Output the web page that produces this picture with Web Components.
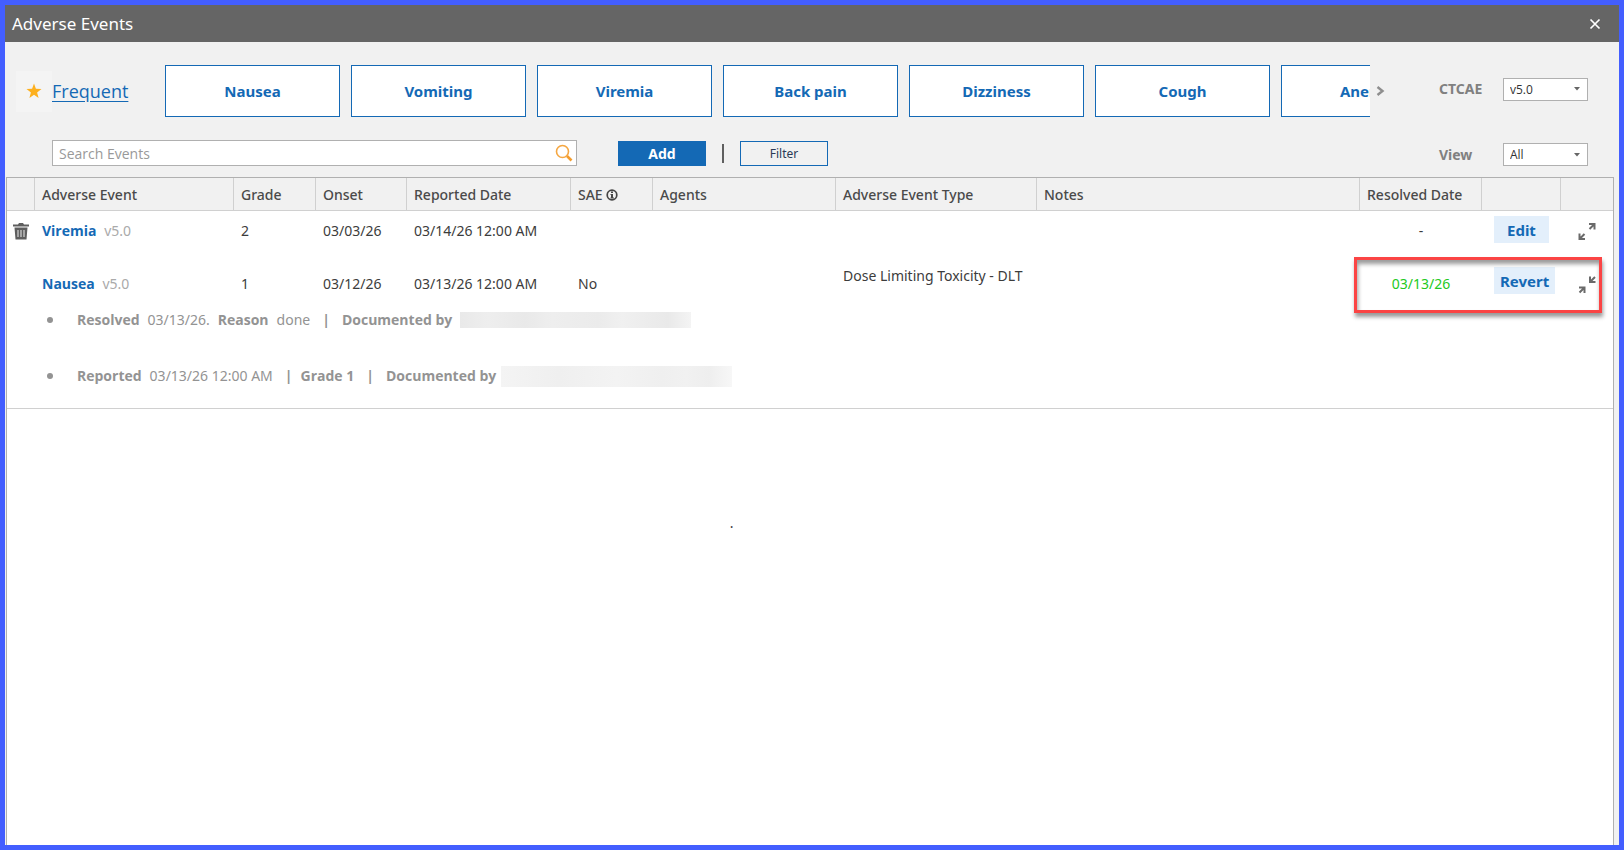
<!DOCTYPE html>
<html lang="en">
<head>
<meta charset="utf-8">
<title>Adverse Events</title>
<style>
    body {
        margin: 0;
        font-family: "Noto Sans", "Open Sans", sans-serif;
        font-size: 14px;
        line-height: 20px;
        color: #3c3c3c;
        --blue: #1469b5;
        --line: #d0d0d0;
        --edge: #b0b0b0;
        --panel: #f1f1f1;
    }
</style>
</head>
<body>
<adverse-dialog heading="Adverse Events">
    <frequent-bar>
        <event-chip>Nausea</event-chip>
        <event-chip>Vomiting</event-chip>
        <event-chip>Viremia</event-chip>
        <event-chip>Back pain</event-chip>
        <event-chip>Dizziness</event-chip>
        <event-chip>Cough</event-chip>
        <event-chip>Anemia</event-chip>
        <labelled-select slot="end" label="CTCAE" options="v5.0,v4.0"></labelled-select>
    </frequent-bar>
    <search-bar>
        <labelled-select slot="end" label="View" options="All,Active,Resolved"></labelled-select>
    </search-bar>
    <event-table></event-table>
</adverse-dialog>

<script>
const ICONS = {
    close: '<svg width="12" height="12" viewBox="0 0 12 12"><path d="M1.500 1.500l9 9M10.500 1.500l-9 9" stroke="#fff" stroke-width="1.700"/></svg>',
    star: '<svg width="16" height="16" viewBox="0 0 16 16"><path d="M8 .5l1.900 5.300 5.600.100-4.400 3.500 1.500 5.600L8 11.800 3.400 15l1.500-5.600L.5 5.900l5.600-.1z" fill="#fdb01e"/></svg>',
    next: '<svg width="9" height="10" viewBox="0 0 9 10"><path d="M1.500 1L6.500 5l-5 4" fill="none" stroke="#8e8e8e" stroke-width="2.400"/></svg>',
    search: '<svg width="18" height="18" viewBox="0 0 18 18"><circle cx="7.500" cy="7.500" r="6" fill="none" stroke="#f5a742" stroke-width="1.600"/><path d="M12 12l4.500 4.500" stroke="#f39c2d" stroke-width="2.600"/></svg>',
    caret: '<svg width="6" height="4" viewBox="0 0 6 4"><path d="M0 0h6L3 3.500z" fill="#666"/></svg>',
    info: '<svg width="12" height="12" viewBox="0 0 12 12"><circle cx="6" cy="6" r="4.800" fill="none" stroke="#454545" stroke-width="1.700"/><path d="M5 2.500h2v1.500H5zM4.500 5H7v3.500h1v1H4.500v-1H5V6h-.5z" fill="#454545"/></svg>',
    trash: '<svg width="16" height="17" viewBox="0 0 16 17"><path d="M0 1.500h5L6 0h4l1 1.500h5v2H0zM1.500 4.500h13l-1 12h-11z" fill="#5e5e5e"/><path d="M5 7v7M8 7v7M11 7v7" stroke="#d5d5d5" stroke-width="1.200"/></svg>',
    expand: '<svg width="18" height="19" viewBox="0 0 18 19"><path d="M11 2h5.500v5.500M16 2.500L11.500 7M1.500 11.500V17H7M2 16.500L6.500 12" fill="none" stroke="#6a6a6a" stroke-width="2"/></svg>',
    collapse: '<svg width="18" height="19" viewBox="0 0 18 19"><path d="M12 1.500V7h5.500M12.500 6.500L17 2M1 12.500h5.500V18M6 13L1.500 17.500" fill="none" stroke="#6a6a6a" stroke-width="2"/></svg>'
};

class AdverseDialog extends HTMLElement {
    constructor() {
        super();
        this.attachShadow({ mode: 'open' });
    }

    connectedCallback() {
        this.shadowRoot.innerHTML = `
            <style>
                :host {
                    display: flex;
                    flex-direction: column;
                    box-sizing: border-box;
                    min-height: 100vh;
                    border: 5px solid #435eff;
                    background: var(--panel);
                }

                header {
                    display: flex;
                    align-items: center;
                    justify-content: space-between;
                    height: 37px;
                    padding: 0 18px 0 7px;
                    background: #656565;
                    color: #fff;
                }

                h1 {
                    margin: 0;
                    font: 400 17px "Noto Sans", sans-serif;
                }

                button {
                    display: flex;
                    padding: 0;
                    border: 0;
                    background: none;
                }
            </style>
            <header>
                <h1>${this.getAttribute('heading')}</h1>
                <button aria-label="Close">${ICONS.close}</button>
            </header>
            <slot></slot>
        `;
    }
}

class FrequentBar extends HTMLElement {
    constructor() {
        super();
        this.attachShadow({ mode: 'open' });
    }

    connectedCallback() {
        this.shadowRoot.innerHTML = `
            <style>
                :host {
                    display: flex;
                    align-items: center;
                    padding: 23px 31px 23px 11px;
                }

                .star {
                    display: flex;
                    align-items: center;
                    justify-content: center;
                    flex: none;
                    width: 36px;
                    height: 41px;
                    background: #f4f4f4;
                }

                .title {
                    flex: none;
                    width: 113px;
                    font: 18px "Open Sans", sans-serif;
                }

                a {
                    color: var(--blue);
                    font-weight: 500;
                    text-underline-offset: 3px;
                }

                .chips {
                    display: flex;
                    flex: 1;
                    gap: 11px;
                    min-width: 0;
                    overflow: hidden;
                }

                .next {
                    display: flex;
                    flex: none;
                    width: 69px;
                    padding: 0 6px;
                    border: 0;
                    background: none;
                }

                ::slotted(labelled-select) {
                    padding-bottom: 4px;
                }
            </style>
            <span class="star">${ICONS.star}</span>
            <span class="title"><a href="#frequent">Frequent</a></span>
            <div class="chips"><slot></slot></div>
            <button class="next" aria-label="More events">${ICONS.next}</button>
            <slot name="end"></slot>
        `;
    }
}

class EventChip extends HTMLElement {
    constructor() {
        super();
        this.attachShadow({ mode: 'open' });
    }

    connectedCallback() {
        this.shadowRoot.innerHTML = `
            <style>
                :host {
                    display: block;
                    flex: none;
                    width: 175px;
                }

                button {
                    width: 100%;
                    height: 52px;
                    padding: 0;
                    border: 1px solid var(--blue);
                    background: #fff;
                    color: var(--blue);
                    font: 700 15px "Noto Sans", sans-serif;
                }
            </style>
            <button><slot></slot></button>
        `;
    }
}

class LabelledSelect extends HTMLElement {
    constructor() {
        super();
        this.attachShadow({ mode: 'open' });
    }

    connectedCallback() {
        const options = this.getAttribute('options').split(',');
        this.shadowRoot.innerHTML = `
            <style>
                :host {
                    display: flex;
                    align-items: center;
                    flex: none;
                }

                label {
                    width: 64px;
                    color: #808080;
                    font-weight: 700;
                }

                .box {
                    display: grid;
                    align-items: center;
                    width: 85px;
                }

                select, svg {
                    grid-area: 1 / 1;
                }

                select {
                    appearance: none;
                    height: 23px;
                    padding: 0 6px;
                    border: 1px solid var(--edge);
                    border-radius: 0;
                    background: #fff;
                    color: #333;
                    font: 12px "Open Sans", sans-serif;
                }

                svg {
                    justify-self: end;
                    margin-right: 8px;
                    pointer-events: none;
                }
            </style>
            <label for="choice">${this.getAttribute('label')}</label>
            <span class="box">
                <select id="choice">${options.map((o) => `<option>${o}</option>`).join('')}</select>
                ${ICONS.caret}
            </span>
        `;
    }
}

class SearchBar extends HTMLElement {
    constructor() {
        super();
        this.attachShadow({ mode: 'open' });
    }

    connectedCallback() {
        this.shadowRoot.innerHTML = `
            <style>
                :host {
                    display: flex;
                    align-items: flex-end;
                    padding: 0 31px 11px 47px;
                }

                .search {
                    display: flex;
                    align-items: center;
                    box-sizing: border-box;
                    flex: 0 1 525px;
                    height: 26px;
                    margin-right: 41px;
                    padding: 0 3px 0 6px;
                    border: 1px solid var(--edge);
                    background: #fff;
                }

                input {
                    flex: 1;
                    min-width: 0;
                    padding: 0;
                    border: 0;
                    outline: 0;
                    background: none;
                    font: 14px "Open Sans", sans-serif;
                }

                input::placeholder {
                    color: #999;
                }

                button {
                    width: 88px;
                    height: 25px;
                    padding: 0;
                    border: 1px solid var(--blue);
                    background: none;
                    color: #2b3a55;
                    font: 12px "Noto Sans", sans-serif;
                }

                .icon {
                    display: flex;
                    width: auto;
                    height: auto;
                    border: 0;
                }

                .add {
                    background: var(--blue);
                    color: #fff;
                    font-size: 14px;
                    font-weight: 700;
                }

                .rule {
                    width: 2px;
                    height: 19px;
                    margin: 0 16px 3px;
                    background: #5f5f5f;
                }

                ::slotted(labelled-select) {
                    margin-left: auto;
                }
            </style>
            <div class="search">
                <input type="text" placeholder="Search Events" aria-label="Search Events">
                <button class="icon" aria-label="Search">${ICONS.search}</button>
            </div>
            <button class="add">Add</button>
            <span class="rule"></span>
            <button>Filter</button>
            <slot name="end"></slot>
        `;
    }
}

class EventTable extends HTMLElement {
    constructor() {
        super();
        this.attachShadow({ mode: 'open' });
    }

    connectedCallback() {
        this.shadowRoot.innerHTML = `
            <style>
                :host {
                    display: block;
                    flex: 1;
                    margin: 0 5px 0 1px;
                    border: 1px solid var(--edge);
                    border-bottom: 0;
                    background: #fff;
                }

                table {
                    width: 100%;
                    table-layout: fixed;
                    border-collapse: separate;
                    border-spacing: 0;
                }

                .w-icon { width: 28px; }
                .w-name { width: 199px; }
                .w-small { width: 82px; }
                .w-onset { width: 91px; }
                .w-reported { width: 164px; }
                .w-agents { width: 183px; }
                .w-type { width: 201px; }
                .w-resolved { width: 122px; }
                .w-action { width: 79px; }
                .w-toggle { width: 52px; }

                th, td {
                    box-sizing: border-box;
                    padding: 0 0 0 7px;
                }

                th {
                    height: 33px;
                    padding-top: 2px;
                    border-right: 1px solid var(--line);
                    border-bottom: 1px solid var(--line);
                    background: var(--panel);
                    color: #4a4a4a;
                    font-weight: 500;
                    text-align: left;
                    white-space: nowrap;
                }

                th:last-child {
                    border-right: 0;
                }

                th svg {
                    vertical-align: -1px;
                }

                td {
                    height: 40px;
                }

                td.center {
                    padding-left: 0;
                    text-align: center;
                }

                td.action {
                    padding-left: 12px;
                    padding-bottom: 3px;
                }

                .resolved-row td {
                    height: 57px;
                    padding-top: 9px;
                }

                .resolved-row .action {
                    padding-top: 5px;
                }

                .resolved-row .raised {
                    padding-top: 0;
                    padding-bottom: 7px;
                }

                b, .name {
                    font-family: "Open Sans", sans-serif;
                    font-weight: 700;
                }

                .name {
                    color: var(--blue);
                    text-decoration: none;
                }

                .version {
                    margin-left: 4px;
                    color: #aaa;
                }

                .date {
                    position: relative;
                    color: #22c922;
                }

                .mark {
                    position: absolute;
                    top: 6px;
                    left: -6px;
                    box-sizing: border-box;
                    width: 248px;
                    height: 56px;
                    border: 3px solid #fb4444;
                    box-shadow: 1px 4px 4px rgba(0, 0, 0, 0.4), inset 1px 4px 4px rgba(0, 0, 0, 0.4);
                    pointer-events: none;
                }

                button {
                    height: 27px;
                    padding: 0 13px;
                    border: 0;
                    background: #e3effb;
                    color: var(--blue);
                    font: 700 15px "Noto Sans", sans-serif;
                }

                .revert {
                    padding: 0 6px;
                }

                .icon {
                    display: flex;
                    height: auto;
                    margin: 0 auto;
                    padding: 0;
                    background: none;
                }

                td.details {
                    padding-left: 35px;
                    border-bottom: 1px solid var(--line);
                }

                ul {
                    display: grid;
                    gap: 32px;
                    margin: 0;
                    padding: 0 0 20px 35px;
                    color: #939393;
                    list-style: none;
                }

                li {
                    display: flex;
                    align-items: center;
                    gap: 8px;
                    height: 24px;
                }

                li::before {
                    content: "";
                    width: 6px;
                    height: 6px;
                    margin: 0 16px 0 -30px;
                    border-radius: 50%;
                    background: #939393;
                }

                .bar {
                    padding: 0 4px;
                }

                .bar.tight {
                    padding-right: 0;
                }

                .redacted {
                    width: 231px;
                    height: 16px;
                    background: linear-gradient(90deg, #e9e9e9, #eee 12%, #e9e9e9 28%, #eee 40%, #ebebeb 60%, #f0f0f0 70%, #e9e9e9 90%, #f4f4f4);
                }

                .redacted.tall {
                    height: 21px;
                    margin-left: -3px;
                    background: linear-gradient(90deg, #f4f4f4, #efefef 25%, #f3f3f3 50%, #efefef 70%, #f1f1f1 80%, #eee 90%, #f7f7f7);
                }

                p {
                    margin: 104px 0 0;
                    padding-left: 45%;
                }
            </style>
            <table>
                <colgroup>
                    <col class="w-icon"><col class="w-name"><col class="w-small"><col class="w-onset">
                    <col class="w-reported"><col class="w-small"><col class="w-agents"><col class="w-type">
                    <col><col class="w-resolved"><col class="w-action"><col class="w-toggle">
                </colgroup>
                <thead>
                    <tr>
                        <th></th>
                        <th>Adverse Event</th>
                        <th>Grade</th>
                        <th>Onset</th>
                        <th>Reported Date</th>
                        <th>SAE ${ICONS.info}</th>
                        <th>Agents</th>
                        <th>Adverse Event Type</th>
                        <th>Notes</th>
                        <th>Resolved Date</th>
                        <th></th>
                        <th></th>
                    </tr>
                </thead>
                <tbody>
                    <tr>
                        <td class="center"><button class="icon" aria-label="Delete Viremia">${ICONS.trash}</button></td>
                        <td><a class="name" href="#viremia">Viremia</a> <span class="version">v5.0</span></td>
                        <td>2</td>
                        <td>03/03/26</td>
                        <td>03/14/26 12:00 AM</td>
                        <td></td>
                        <td></td>
                        <td></td>
                        <td></td>
                        <td class="center">-</td>
                        <td class="action"><button>Edit</button></td>
                        <td class="center"><button class="icon" aria-label="Expand">${ICONS.expand}</button></td>
                    </tr>
                    <tr class="resolved-row">
                        <td></td>
                        <td><a class="name" href="#nausea">Nausea</a> <span class="version">v5.0</span></td>
                        <td>1</td>
                        <td>03/12/26</td>
                        <td>03/13/26 12:00 AM</td>
                        <td>No</td>
                        <td></td>
                        <td class="raised">Dose Limiting Toxicity - DLT</td>
                        <td></td>
                        <td class="center date">03/13/26<span class="mark"></span></td>
                        <td class="action"><button class="revert">Revert</button></td>
                        <td class="center"><button class="icon" aria-label="Collapse">${ICONS.collapse}</button></td>
                    </tr>
                    <tr>
                        <td class="details" colspan="12">
                            <ul>
                                <li><b>Resolved</b><span>03/13/26.</span><b>Reason</b><span>done</span><b class="bar">|</b><b>Documented by</b><span class="redacted"></span></li>
                                <li><b>Reported</b><span>03/13/26 12:00 AM</span><b class="bar tight">|</b><b>Grade 1</b><b class="bar">|</b><b>Documented by</b><span class="redacted tall"></span></li>
                            </ul>
                        </td>
                    </tr>
                </tbody>
            </table>
            <p>.</p>
        `;
    }
}

customElements.define('adverse-dialog', AdverseDialog);
customElements.define('frequent-bar', FrequentBar);
customElements.define('event-chip', EventChip);
customElements.define('labelled-select', LabelledSelect);
customElements.define('search-bar', SearchBar);
customElements.define('event-table', EventTable);
</script>
</body>
</html>
